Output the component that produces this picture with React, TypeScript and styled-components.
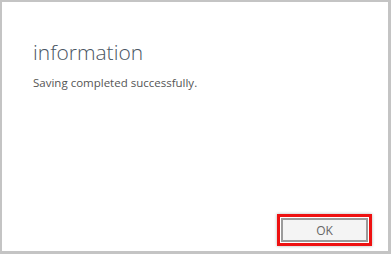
import React from "react";
import styled, { createGlobalStyle } from "styled-components";

const Global = createGlobalStyle`
  html, body { margin: 0; padding: 0; background: #fff; }
  body { font-family: "Open Sans", "Noto Sans", sans-serif; }
`;

const Frame = styled.div`
  box-sizing: border-box;
  width: 391px;
  height: 254px;
  border-style: solid;
  border-color: #c4c4c4;
  border-width: 2px 3px 3px 2px;
  background: #fff;
  display: flex;
  flex-direction: column;
  padding: 37px 16px 5px 31px;
`;

const Title = styled.h1`
  margin: 0;
  font-family: "Open Sans", "Noto Sans", sans-serif;
  font-weight: 300;
  font-size: 21px;
  line-height: 26px;
  color: #4a5563;
`;

const Message = styled.p`
  margin: 10px 0 0;
  font-size: 11.5px;
  line-height: 16px;
  color: #555555;
`;

const Footer = styled.div`
  margin-top: auto;
  display: flex;
  justify-content: flex-end;
`;

const Highlight = styled.div`
  border: 3px solid #ee1111;
  padding: 1px;
  box-shadow: 0 0 3px rgba(0, 0, 0, 0.3);
`;

const Button = styled.button`
  box-sizing: border-box;
  width: 87px;
  height: 24px;
  border: 2px solid #9a9a9a;
  background: #f4f4f4;
  font-family: "Open Sans", "Noto Sans", sans-serif;
  font-size: 12px;
  color: #666666;
  padding: 0;
  display: block;
`;

export default function App() {
  return (
    <>
      <Global />
      <Frame>
        <Title>information</Title>
        <Message>Saving completed successfully.</Message>
        <Footer>
          <Highlight>
            <Button>OK</Button>
          </Highlight>
        </Footer>
      </Frame>
    </>
  );
}
